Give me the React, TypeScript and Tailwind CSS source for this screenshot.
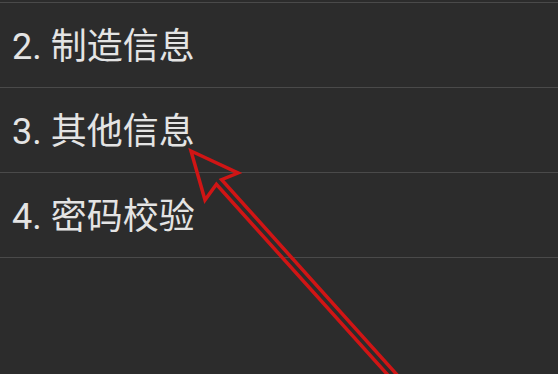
import React from "react";

const items = ["2. 制造信息", "3. 其他信息", "4. 密码校验"];

export default function App() {
  return (
    <div
      className="relative w-[558px] h-[374px] overflow-hidden bg-[#2c2c2c] pt-[2px]"
      style={{ fontFamily: 'Roboto, "Noto Sans CJK SC", sans-serif' }}
    >
      {items.map((t) => (
        <div
          key={t}
          className="flex h-[85px] items-center border-t border-[#4a4a4a] pl-[12px] pt-[4px] text-[36px] text-[#e4e4e4]"
        >
          {t}
        </div>
      ))}
      <div className="border-t border-[#4a4a4a]" />
      <svg
        className="absolute inset-0"
        width="558"
        height="374"
        viewBox="0 0 558 374"
      >
        <polygon
          points="191,151 238,173 221.6,179.7 408.6,387.7 403.4,392.3 216.4,184.3 205,200"
          fill="none"
          stroke="#d01515"
          strokeWidth="3.5"
          strokeLinejoin="miter"
        />
      </svg>
    </div>
  );
}
